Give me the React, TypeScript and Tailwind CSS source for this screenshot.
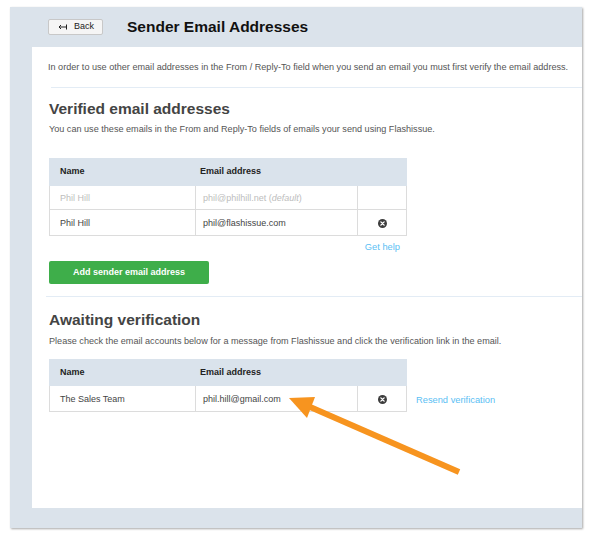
import React from "react";

const font = { fontFamily: '"Liberation Sans", Arial, Helvetica, sans-serif' };

function CloseIcon() {
  return (
    <svg width="9" height="9" viewBox="0 0 10 10">
      <circle cx="5" cy="5" r="5" fill="#3d3d3d" />
      <path d="M3.2 3.2 L6.8 6.8 M6.8 3.2 L3.2 6.8" stroke="#fff" strokeWidth="1.5" strokeLinecap="round" />
    </svg>
  );
}

function HeaderRow({ h }: { h: string }) {
  return (
    <div className={`flex ${h} bg-[#dae3ec] text-[9px] font-bold text-[#222]`}>
      <div className="w-[147px] flex items-center pl-[11px]">Name</div>
      <div className="w-[162px] flex items-center pl-[4px]">Email address</div>
      <div className="flex-1" />
    </div>
  );
}

function Row({ name, email, light, close, h }: { name: string; email: React.ReactNode; light?: boolean; close?: boolean; h: string }) {
  return (
    <div className={`flex ${h} border-l border-r border-b border-[#dcdcdc] text-[9px] ${light ? "text-[#bdbdbd]" : "text-[#444]"}`}>
      <div className="w-[146px] flex items-center pl-[10px] pt-[3px] border-r border-[#dcdcdc]">{name}</div>
      <div className="w-[162px] flex items-center pl-[7px] pt-[3px] border-r border-[#dcdcdc]">{email}</div>
      <div className="flex-1 flex items-center justify-center pt-[1px]">{close ? <CloseIcon /> : null}</div>
    </div>
  );
}

export default function App() {
  return (
    <div className="relative w-[590px] h-[547px] bg-white pt-[7px] pl-[10px]" style={font}>
      <div className="w-[572px] h-[521px] bg-[#dbe3eb] flex flex-col shadow-[1px_1px_2px_rgba(0,0,0,0.35)]">
        <div className="h-[40px] flex items-center pl-[38px] shrink-0">
          <div className="w-[55px] h-[16px] bg-[#f5f5f5] border border-[#c8c8c8] rounded-[2px] flex items-center pl-[9px] gap-[7px] text-[9px] text-[#222] mt-[-1px]">
            <svg width="9" height="6" viewBox="0 0 9 6">
              <path d="M8.5 0.5 V5.5 M8.5 3 H1 M3 1 L1 3 L3 5" stroke="#222" strokeWidth="1" fill="none" />
            </svg>
            <span>Back</span>
          </div>
          <div className="ml-[24px] text-[15.5px] font-bold text-[#111]">Sender Email Addresses</div>
        </div>
        <div className="ml-[22px] flex-1 mb-[20px] bg-white flex flex-col">
          <div className="pl-[16px] pt-[14px] text-[9.1px] leading-[12px] text-[#555]">
            In order to use other email addresses in the From / Reply-To field when you send an email you must first verify the email address.
          </div>
          <div className="ml-[19px] mt-[14px] h-px bg-[#e3ecf5]" />
          <div className="pl-[17px]">
            <div className="mt-[12px] text-[15.5px] leading-[18px] font-bold text-[#444]">Verified email addresses</div>
            <div className="mt-[5px] text-[9.1px] leading-[12px] text-[#555]">
              You can use these emails in the From and Reply-To fields of emails your send using Flashissue.
            </div>
            <div className="mt-[23px] w-[358px]">
              <HeaderRow h="h-[28px]" />
              <Row h="h-[24px]" name="Phil Hill" light email={<span>phil@philhill.net (<i className="italic">default</i>)</span>} />
              <Row h="h-[26px]" name="Phil Hill" email="phil@flashissue.com" close />
            </div>
            <div className="w-[358px] flex justify-end pr-[7px] mt-[5px] text-[9.3px] leading-[12px] text-[#5bc0f4]">Get help</div>
            <div className="mt-[8px] w-[160px] h-[23px] rounded-[2px] bg-[#3eae4a] text-white text-[9px] font-bold flex items-center justify-center">
              Add sender email address
            </div>
          </div>
          <div className="ml-[14px] mt-[12px] h-px bg-[#e3ecf5]" />
          <div className="pl-[17px]">
            <div className="mt-[14px] text-[15.5px] leading-[18px] font-bold text-[#444]">Awaiting verification</div>
            <div className="mt-[6px] text-[9.1px] leading-[12px] text-[#555]">
              Please check the email accounts below for a message from Flashissue and click the verification link in the email.
            </div>
            <div className="mt-[12px] flex items-end">
              <div className="w-[358px]">
                <HeaderRow h="h-[27px]" />
                <Row h="h-[26px]" name="The Sales Team" email="phil.hill@gmail.com" close />
              </div>
              <div className="h-[26px] flex items-center pt-[4px] ml-[9px] text-[9.3px] text-[#5bc0f4]">Resend verification</div>
            </div>
          </div>
        </div>
      </div>
      <svg className="absolute left-0 top-0 pointer-events-none" width="590" height="547" viewBox="0 0 590 547">
        <line x1="459" y1="472" x2="309" y2="406.5" stroke="#f7941f" strokeWidth="6" />
        <polygon points="289,398 315,397 307,418" fill="#f7941f" />
      </svg>
    </div>
  );
}
